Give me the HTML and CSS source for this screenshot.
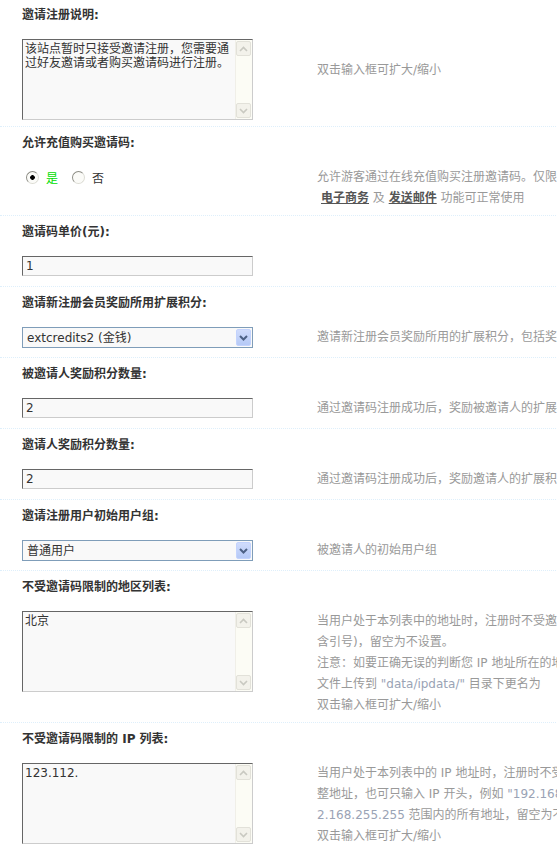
FILE: index.html
```html
<!DOCTYPE html>
<html lang="zh-CN">
<head>
<meta charset="utf-8">
<title>邀请注册设置</title>
<link rel="stylesheet" href="styles.css">
</head>
<body>
<div class="settings">

  <div class="setting">
    <div class="label">邀请注册说明:</div>
    <div class="value">
      <div class="field">
        <div class="ta">
          <textarea>该站点暂时只接受邀请注册，您需要通过好友邀请或者购买邀请码进行注册。</textarea>
          <div class="sb">
            <span class="sbbtn"><svg width="9" height="6" viewBox="0 0 9 6"><path d="M1 5 L4.5 1.5 L8 5" fill="none" stroke="#c9c9c1" stroke-width="1.6"/></svg></span>
            <span class="sbtrack"></span>
            <span class="sbbtn"><svg width="9" height="6" viewBox="0 0 9 6"><path d="M1 1 L4.5 4.5 L8 1" fill="none" stroke="#c9c9c1" stroke-width="1.6"/></svg></span>
          </div>
        </div>
      </div>
      <div class="tips"><br>双击输入框可扩大/缩小</div>
    </div>
  </div>

  <div class="setting">
    <div class="label">允许充值购买邀请码:</div>
    <div class="value">
      <div class="field">
        <div class="radios">
          <label class="opt checked"><input type="radio" name="buy" checked>是</label>
          <label class="opt"><input type="radio" name="buy">否</label>
        </div>
      </div>
      <div class="tips">允许游客通过在线充值购买注册邀请码。仅限开启<br><span class="indent"><a href="#">电子商务</a> 及 <a href="#">发送邮件</a> 功能可正常使用</span></div>
    </div>
  </div>

  <div class="setting">
    <div class="label">邀请码单价(元):</div>
    <div class="value">
      <div class="field"><input class="txt" type="text" value="1"></div>
      <div class="tips"></div>
    </div>
  </div>

  <div class="setting">
    <div class="label">邀请新注册会员奖励所用扩展积分:</div>
    <div class="value">
      <div class="field">
        <div class="sel">
          <select><option>extcredits2 (金钱)</option></select>
          <span class="arrow"><svg width="9" height="6" viewBox="0 0 9 6"><path d="M1 1 L4.5 4.5 L8 1" fill="none" stroke="#4d6185" stroke-width="2"/></svg></span>
        </div>
      </div>
      <div class="tips">邀请新注册会员奖励所用的扩展积分，包括奖励邀请人和被邀请人</div>
    </div>
  </div>

  <div class="setting">
    <div class="label">被邀请人奖励积分数量:</div>
    <div class="value">
      <div class="field"><input class="txt" type="text" value="2"></div>
      <div class="tips">通过邀请码注册成功后，奖励被邀请人的扩展积分数量</div>
    </div>
  </div>

  <div class="setting">
    <div class="label">邀请人奖励积分数量:</div>
    <div class="value">
      <div class="field"><input class="txt" type="text" value="2"></div>
      <div class="tips">通过邀请码注册成功后，奖励邀请人的扩展积分数量</div>
    </div>
  </div>

  <div class="setting">
    <div class="label">邀请注册用户初始用户组:</div>
    <div class="value">
      <div class="field">
        <div class="sel">
          <select><option>普通用户</option></select>
          <span class="arrow"><svg width="9" height="6" viewBox="0 0 9 6"><path d="M1 1 L4.5 4.5 L8 1" fill="none" stroke="#4d6185" stroke-width="2"/></svg></span>
        </div>
      </div>
      <div class="tips">被邀请人的初始用户组</div>
    </div>
  </div>

  <div class="setting">
    <div class="label">不受邀请码限制的地区列表:</div>
    <div class="value">
      <div class="field">
        <div class="ta">
          <textarea>北京</textarea>
          <div class="sb">
            <span class="sbbtn"><svg width="9" height="6" viewBox="0 0 9 6"><path d="M1 5 L4.5 1.5 L8 5" fill="none" stroke="#c9c9c1" stroke-width="1.6"/></svg></span>
            <span class="sbtrack"></span>
            <span class="sbbtn"><svg width="9" height="6" viewBox="0 0 9 6"><path d="M1 1 L4.5 4.5 L8 1" fill="none" stroke="#c9c9c1" stroke-width="1.6"/></svg></span>
          </div>
        </div>
      </div>
      <div class="tips">当用户处于本列表中的地址时，注册时不受邀请码限制。每个地区一行，例如 "北京"(不<br>含引号)，留空为不设置。<br>注意：如要正确无误的判断您 IP 地址所在的地区，请下载 IP 数据库，并把 wry.dat<br>文件上传到 <span class="q">"data/ipdata/"</span> 目录下更名为<br>双击输入框可扩大/缩小</div>
    </div>
  </div>

  <div class="setting">
    <div class="label">不受邀请码限制的 IP 列表:</div>
    <div class="value tight">
      <div class="field">
        <div class="ta">
          <textarea>123.112.</textarea>
          <div class="sb">
            <span class="sbbtn"><svg width="9" height="6" viewBox="0 0 9 6"><path d="M1 5 L4.5 1.5 L8 5" fill="none" stroke="#c9c9c1" stroke-width="1.6"/></svg></span>
            <span class="sbtrack"></span>
            <span class="sbbtn"><svg width="9" height="6" viewBox="0 0 9 6"><path d="M1 1 L4.5 4.5 L8 1" fill="none" stroke="#c9c9c1" stroke-width="1.6"/></svg></span>
          </div>
        </div>
      </div>
      <div class="tips">当用户处于本列表中的 IP 地址时，注册时不受邀请码限制。每个 IP 一行，既可输入完<br>整地址，也可只输入 IP 开头，例如 <span class="q">"192.168."</span> (不含引号) 可匹配 192.168.0.0～19<br><span class="q">2.168.255.255</span> 范围内的所有地址，留空为不设置<br>双击输入框可扩大/缩小</div>
    </div>
  </div>

</div>
</body>
</html>
```

FILE: styles.css
```css
html, body {
  margin: 0;
  padding: 0;
  overflow: hidden;
  background: #fff;
}

body {
  font-family: "DejaVu Sans", "Noto Sans CJK SC", sans-serif;
  font-size: 12px;
  color: #333;
}

.settings {
  width: 1000px;
  margin-top: -2px;
}

.setting {
  border-top: 1px dotted #deeffb;
}

.label {
  padding: 8px 0 0 22px;
  line-height: 16px;
  font-weight: bold;
  color: #333;
}

.value {
  display: flex;
  align-items: flex-start;
  padding: 16px 0 6px;
}

.value.tight {
  padding-bottom: 2px;
}

.field {
  flex: none;
  width: 295px;
  padding-left: 22px;
}

.tips {
  color: #999;
  line-height: 21px;
  white-space: nowrap;
}

.tips a {
  color: #555;
  font-weight: bold;
  text-decoration: underline;
}

.tips .indent {
  padding-left: 4px;
}

.tips .q {
  color: #9aa3b5;
}

/* text input */
.txt {
  display: block;
  box-sizing: border-box;
  width: 231px;
  height: 20px;
  margin: 0 0 4px;
  padding: 0 3px;
  border: 1px solid;
  border-color: #666 #ccc #ccc #666;
  background: #f9f9f9;
  font-family: "DejaVu Sans", "Noto Sans CJK SC", sans-serif;
  font-size: 12px;
  color: #333;
  outline: none;
}

/* textarea with classic scrollbar */
.ta {
  display: flex;
  box-sizing: border-box;
  width: 231px;
  height: 81px;
  border: 1px solid;
  border-color: #666 #ccc #ccc #666;
  background: #f9f9f9;
}

.ta textarea {
  flex: 1;
  min-width: 0;
  margin: 0;
  padding: 2px 2px;
  border: 0;
  background: transparent;
  resize: none;
  overflow: hidden;
  outline: none;
  font-family: "DejaVu Sans", "Noto Sans CJK SC", sans-serif;
  font-size: 12px;
  line-height: 14px;
  color: #333;
}

.sb {
  flex: none;
  display: flex;
  flex-direction: column;
  width: 16px;
  padding: 1px 0;
  background: #fcfcf5;
  border-left: 1px solid #f0efe8;
}

.sbbtn {
  display: flex;
  align-items: center;
  justify-content: center;
  box-sizing: border-box;
  height: 15px;
  margin: 0 1px 0 0;
  border: 1px solid #e2e1d9;
  border-radius: 2px;
  background: #f3f2eb;
}

.sbtrack {
  flex: 1;
}

/* select */
.sel {
  position: relative;
  width: 231px;
  height: 21px;
  margin-bottom: 3px;
}

.sel select {
  display: block;
  box-sizing: border-box;
  width: 100%;
  height: 100%;
  margin: 0;
  padding: 0 0 0 4px;
  border: 1px solid #7f9db9;
  border-radius: 0;
  background: #f9f9f9;
  appearance: none;
  -webkit-appearance: none;
  font-family: "DejaVu Sans", "Noto Sans CJK SC", sans-serif;
  font-size: 12px;
  color: #333;
  outline: none;
}

.sel .arrow {
  position: absolute;
  top: 2px;
  right: 2px;
  width: 15px;
  height: 17px;
  box-sizing: border-box;
  display: flex;
  align-items: center;
  justify-content: center;
  border: 1px solid #c3d3fd;
  border-radius: 2px;
  background: linear-gradient(#d0dcfc, #b5c9f6);
  pointer-events: none;
}

/* radios */
.radios {
  display: flex;
  align-items: center;
  height: 20px;
}

.opt {
  display: flex;
  align-items: center;
  color: #333;
}

.opt + .opt {
  margin-left: 10px;
}

.opt.checked {
  color: #0d0;
}

.opt input {
  appearance: none;
  -webkit-appearance: none;
  box-sizing: border-box;
  width: 13px;
  height: 13px;
  margin: 0 7px 0 4px;
  border: 1px solid;
  border-color: #8d8d85 #dcdcd4 #dcdcd4 #8d8d85;
  border-radius: 50%;
  background: #fbfbf8;
}

.opt input:checked {
  background: radial-gradient(circle, #000 0, #000 2px, #fbfbf8 2.6px);
}
```
